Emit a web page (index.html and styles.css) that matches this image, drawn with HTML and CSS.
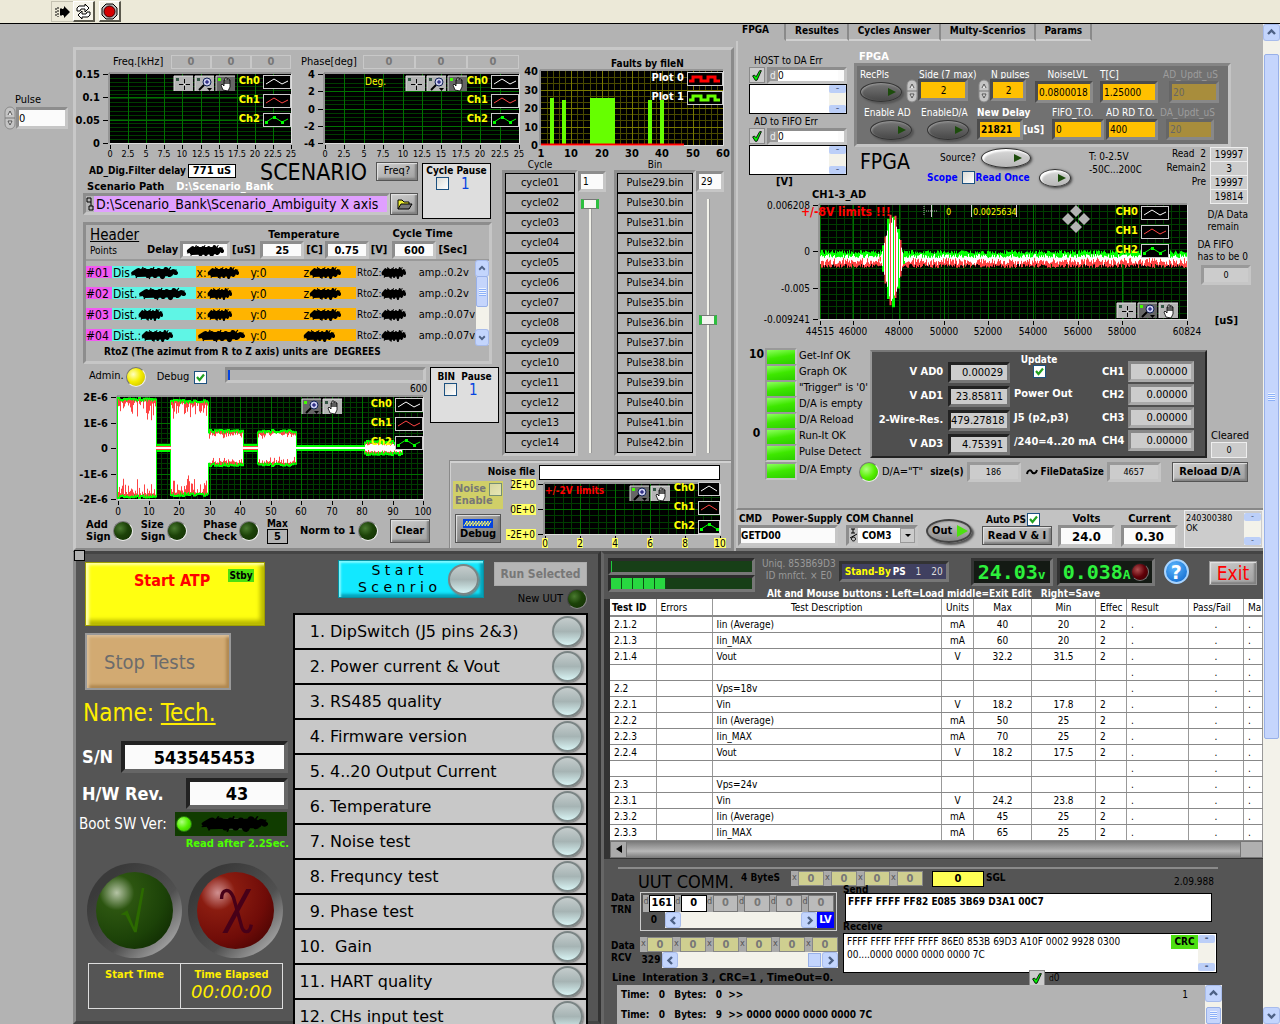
FILE: index.html
```
<!DOCTYPE html>
<html lang="en">

<head>

<meta charset="utf-8">
<meta name="viewport" content="width=device-width, initial-scale=1.0">

<title>ATP station</title>

<link rel="stylesheet" href="styles.css">

</head>

<body>

<svg class="defs" aria-hidden="true">
  <symbol id="okmark" viewBox="0 0 16 16"><path d="M3 9l2-1 2 2 4-7 2 0-5 11-2 0z" fill="#0e0" stroke="#000" stroke-width="1"/></symbol>
  <symbol id="up" viewBox="0 0 15 15"><path d="M4 9l3.500-3.500L11 9" fill="none" stroke="#4d6185" stroke-width="2.400"/></symbol>
  <symbol id="down" viewBox="0 0 15 15"><path d="M4 6l3.500 3.500L11 6" fill="none" stroke="#4d6185" stroke-width="2.400"/></symbol>
  <symbol id="left" viewBox="0 0 15 15"><path d="M9 4L5.500 7.500 9 11" fill="none" stroke="#4d6185" stroke-width="2.400"/></symbol>
  <symbol id="right" viewBox="0 0 15 15"><path d="M6 4l3.500 3.500L6 11" fill="none" stroke="#4d6185" stroke-width="2.400"/></symbol>
  <symbol id="spin" viewBox="0 0 12 24">
    <rect x="1" y="1" width="10" height="22" rx="5" fill="#c4c4c4" stroke="#8a8a8a"/>
    <path d="M1 12h10" stroke="#777"/>
    <path d="M4 9l2-4 2 4M4 15h4l-2 4z" fill="#eee" stroke="#555"/>
  </symbol>
  <symbol id="scribble" viewBox="0 0 40 14" preserveAspectRatio="none">
    <path d="M3 7L7 4 9 9 12 4 15 10 18 4 21 10 24 4 27 11 30 3 33 9 36 5 38 7M4 7L36 6M6 9L34 8M8 5L32 5" fill="none" stroke="#000" stroke-width="4" stroke-linecap="round" stroke-linejoin="round"/>
    <path d="M5 12L11 1M16 13L20 1M27 13L34 1M1 9L39 4" stroke="#000"/>
  </symbol>
</svg>

<header class="toolbar">
  <button class="tool flat" aria-label="Run">
    <svg width="18" height="16"><path d="M1 5h2M1 8h2M1 11h2M4 3v10M6 5h5M6 11h5" stroke="#000" stroke-dasharray="2 1"/><path d="M6 5h4V2l6 6-6 6v-3H6z"/></svg>
  </button>
  <button class="tool" aria-label="Run continuously">
    <svg width="17" height="17" fill="#fff" stroke="#000"><path d="M2 8V5l2-2h6V1l4 4-4 4V6H6L5 8z"/><path d="M15 9v3l-2 2H7v2l-4-4 4-4v3h4l1-2z"/></svg>
  </button>
  <button class="tool abort" aria-label="Abort">
    <svg width="17" height="17"><path d="M5 1h7l4 4v7l-4 4H5l-4-4V5z" fill="#bbb" stroke="#000"/><circle cx="8.500" cy="8.500" r="5.500" fill="#d60000" stroke="#300"/></svg>
  </button>
</header>

<div class="desk">

<aside class="side">
  <label for="pulse">Pulse</label>
  <div class="row">
    <svg class="spin"><use href="#spin"/></svg>
    <input id="pulse" class="in" value="0">
  </div>
</aside>

<main class="stage">

<div class="upper">

<!-- scenario -->
<section class="scenario">

  <div class="charts">
    <div class="chart">
      <div class="chart-head">Freq.[kHz] <output class="cell">0</output><output class="cell">0</output><output class="cell">0</output></div>
      <svg data-chart="freq"></svg>
    </div>
    <div class="chart phase">
      <div class="chart-head">Phase[deg] <output class="cell">0</output><output class="cell">0</output><output class="cell">0</output></div>
      <svg data-chart="phase"></svg>
    </div>
    <div class="chart faults">
      <div class="chart-head"><b>Faults by fileN</b></div>
      <svg data-chart="faults"></svg>
    </div>
  </div>

  <div class="setup">
    <div class="setup-top">
      <div class="paths">
        <div class="row filter">
          <b>AD_Dig.Filter delay</b>
          <output class="boxed">771 uS</output>
          <h2>SCENARIO</h2>
          <button class="btn freq">Freq?</button>
        </div>
        <div class="row path-label">
          <label for="path">Scenario Path</label>
          <span>D:\Scenario_Bank</span>
        </div>
        <div class="row path">
          <div class="path-box">
            <svg width="8" height="14"><path d="M1 1h4v4H1zM5 5v4M3 9h4v4H3z" fill="none" stroke="#000"/></svg>
            <input id="path" value="D:\Scenario_Bank\Scenario_Ambiguity X axis">
          </div>
          <button class="btn folder" aria-label="Browse">
            <svg width="18" height="14"><path d="M2 12V3h4l2 2h5v2" fill="#ee3" stroke="#000"/><path d="M2 12l3-5h11l-3 5z" fill="#777" stroke="#000"/></svg>
          </button>
        </div>
      </div>
      <div class="pause">
        <b>Cycle Pause</b>
        <label><input type="checkbox" class="check"> <em>1</em></label>
      </div>
    </div>

    <div class="header-panel">
      <div class="header-top">
        <div class="titles"><h3>Header</h3><span>Points</span></div>
        <div class="fields">
          <div class="field delay"><span>Delay</span><output class="in"><svg class="ink"><use href="#scribble"/></svg></output><span>[uS]</span></div>
        </div>
        <div class="fields temp">
          <b>Temperature</b>
          <div class="field"><input class="in" aria-label="Temperature C" value="25"><span>[C]</span><input class="in" aria-label="Temperature V" value="0.75"><span>[V]</span></div>
        </div>
        <div class="fields cycletime">
          <b>Cycle Time</b>
          <div class="field"><input class="in" aria-label="Cycle time" value="600"><span>[Sec]</span></div>
        </div>
      </div>
      <div class="points">
        <table>
          <tr><td class="pt">#01</td><td class="dist">Dis<svg class="ink wide"><use href="#scribble"/></svg></td><td class="xyz">x:<svg class="ink"><use href="#scribble"/></svg></td><td class="xyz">y:0</td><td class="xyz">z<svg class="ink"><use href="#scribble"/></svg></td><td class="rtoz">RtoZ:<svg class="ink small"><use href="#scribble"/></svg></td><td>amp.:0.2v</td></tr>
          <tr><td class="pt">#02</td><td class="dist">Dist.<svg class="ink wide"><use href="#scribble"/></svg></td><td class="xyz">x:<svg class="ink small"><use href="#scribble"/></svg></td><td class="xyz">y:0</td><td class="xyz">z<svg class="ink"><use href="#scribble"/></svg></td><td class="rtoz">RtoZ:<svg class="ink small"><use href="#scribble"/></svg></td><td>amp.:0.2v</td></tr>
          <tr><td class="pt">#03</td><td class="dist">Dist.<svg class="ink small"><use href="#scribble"/></svg></td><td class="xyz">x:<svg class="ink small"><use href="#scribble"/></svg></td><td class="xyz">y:0</td><td class="xyz">z<svg class="ink"><use href="#scribble"/></svg></td><td class="rtoz">RtoZ:<svg class="ink small"><use href="#scribble"/></svg></td><td>amp.:0.07v</td></tr>
          <tr><td class="pt">#04</td><td class="dist">Dist.:<svg class="ink"><use href="#scribble"/></svg></td><td class="xyz"><svg class="ink wide"><use href="#scribble"/></svg></td><td class="xyz">y:0</td><td class="xyz"><svg class="ink"><use href="#scribble"/></svg></td><td class="rtoz">RtoZ:<svg class="ink small"><use href="#scribble"/></svg></td><td>amp.:0.07v</td></tr>
        </table>
        <div class="vscroll thin">
          <button aria-label="Up"><svg><use href="#up"/></svg></button>
          <div class="thumb short"></div>
          <button aria-label="Down"><svg><use href="#down"/></svg></button>
        </div>
      </div>
      <b class="note">RtoZ (The azimut from R to Z axis) units are&nbsp; DEGREES</b>
    </div>
  </div>

  <div class="lists">
    <div class="list">
      <span class="list-title">Cycle</span>
      <ul>
        <li>cycle01</li><li>cycle02</li><li>cycle03</li><li>cycle04</li><li>cycle05</li><li>cycle06</li><li>cycle07</li>
        <li>cycle08</li><li>cycle09</li><li>cycle10</li><li>cycle11</li><li>cycle12</li><li>cycle13</li><li>cycle14</li>
      </ul>
    </div>
    <div class="pick">
      <input class="in" aria-label="Cycle index" value="1">
      <input type="range" aria-label="Cycle" min="1" max="60" value="1">
    </div>
    <div class="list bin">
      <span class="list-title">Bin</span>
      <ul>
        <li>Pulse29.bin</li><li>Pulse30.bin</li><li>Pulse31.bin</li><li>Pulse32.bin</li><li>Pulse33.bin</li><li>Pulse34.bin</li><li>Pulse35.bin</li>
        <li>Pulse36.bin</li><li>Pulse37.bin</li><li>Pulse38.bin</li><li>Pulse39.bin</li><li>Pulse40.bin</li><li>Pulse41.bin</li><li>Pulse42.bin</li>
      </ul>
    </div>
    <div class="pick">
      <input class="in" aria-label="Bin index" value="29">
      <input type="range" aria-label="Bin" min="1" max="60" value="29">
    </div>
  </div>

  <div class="wave">
    <div class="row wave-top">
      <span>Admin.</span><i class="led yellow"></i>
      <label class="debug">Debug <input type="checkbox" class="check" checked></label>
      <div class="progress-box"><progress class="tiny" max="600" value="6" aria-label="Progress"></progress><span>600</span></div>
    </div>
    <svg data-chart="wave"></svg>
    <div class="row wave-bottom">
      <b>Add<br>Sign</b><i class="led"></i>
      <b>Size<br>Sign</b><i class="led"></i>
      <b>Phase<br>Check</b><i class="led"></i>
      <label class="max">Max<input value="5"></label>
      <b class="norm">Norm to 1</b><i class="led"></i>
      <button class="btn clear">Clear</button>
    </div>
  </div>

  <div class="pause bin-pause">
    <b>BIN&nbsp; Pause</b>
    <label><input type="checkbox" class="check"> <em>1</em></label>
  </div>

  <div class="noise">
    <div class="row noise-file"><label for="noisefile">Noise file</label><input id="noisefile"></div>
    <div class="row">
      <div class="noise-side">
        <label class="noise-enable">Noise<br>Enable <input type="checkbox" class="check" disabled></label>
        <button class="btn debug-btn"><svg width="30" height="9"><path d="M0 0h30v9H0z" fill="#0443e0"/><path d="M1 7l3-5v5l3-5v5l3-5v5l3-5v5l3-5v5l3-5v5l3-5v5l3-5v5l3-5" fill="none" stroke="#ff6"/></svg>Debug</button>
      </div>
      <svg data-chart="noise"></svg>
    </div>
  </div>

</section>

<!-- fpga -->
<section class="fpga">

  <nav class="tabs">
    <a href="#fpga" class="active">FPGA</a><a href="#resultes">Resultes</a><a href="#cycles">Cycles Answer</a><a href="#multy">Multy-Scenrios</a><a href="#params">Params</a>
  </nav>

  <div class="tab-page">

    <div class="errs">
      <span class="err-title">HOST to DA Err</span>
      <div class="err-row"><svg class="ok"><use href="#okmark"/></svg><label class="in"><i>d</i><input aria-label="HOST to DA code" value="0"></label></div>
      <div class="err-box"><textarea aria-label="HOST to DA source"></textarea><span class="mini"><i>-</i><i>-</i></span></div>
      <span class="err-title">AD to FIFO Err</span>
      <div class="err-row"><svg class="ok"><use href="#okmark"/></svg><label class="in"><i>d</i><input aria-label="AD to FIFO code" value="0"></label></div>
      <div class="err-box"><textarea aria-label="AD to FIFO source"></textarea><span class="mini"><i>-</i><i>-</i></span></div>
      <b>[V]</b>
    </div>

    <div class="fpga-box">
      <b>FPGA</b>
      <div class="fpga-panel">
        <div class="fpga-row one">
          <label>RecPls<button class="oval"></button></label>
          <label class="spun"><span>Side (7 max)</span><svg class="spin"><use href="#spin"/></svg><input class="amber mid" value="2"></label>
          <label class="spun"><span>N pulses</span><svg class="spin"><use href="#spin"/></svg><input class="amber mid" value="2"></label>
          <label class="c">NoiseLVL<input class="amber" value="0.0800018"></label>
          <label>T[C]<input class="amber" value="1.25000"></label>
          <label class="off">AD_Updt_uS<input class="amber" value="20" disabled></label>
        </div>
        <div class="fpga-row two">
          <label>Enable AD<button class="oval"></button></label>
          <label>EnableD/A<button class="oval"></button></label>
          <label class="newdelay"><b>New Delay</b><input class="amber" value="21821"><b>[uS]</b></label>
          <label>FIFO_T.O.<input class="amber" value="0"></label>
          <label>AD RD T.O.<input class="amber" value="400"></label>
          <label class="off">DA_Updt_uS<input class="amber" value="20" disabled></label>
        </div>
      </div>
    </div>

    <div class="source">
      <h2>FPGA</h2>
      <div class="source-mid">
        <div class="row"><span>Source?</span><button class="oval light" aria-label="Source"></button></div>
        <div class="row scope"><b>Scope</b><label><input type="checkbox" class="check"><b>Read Once</b></label><button class="oval light small" aria-label="Read once"></button></div>
      </div>
      <p>T: 0-2.5V<br>-50C...200C</p>
    </div>

    <div class="reads">
      <div>Read&nbsp; 2 <output>19997</output></div>
      <div>Remain2 <output>3</output></div>
      <div>Pre <output>19997</output></div>
      <div><output>19814</output></div>
      <p>D/A Data<br>remain</p>
      <p>DA FIFO<br>has to be 0</p>
      <output class="sunk">0</output>
      <b>[uS]</b>
    </div>

    <div class="ad"><svg data-chart="ad"></svg></div>

    <div class="status">
      <div class="scale"><b>10</b><b>0</b></div>
      <ul class="leds">
        <li>Get-Inf OK</li><li>Graph OK</li><li>"Trigger" is '0'</li><li>D/A is empty</li><li>D/A Reload</li><li>Run-It OK</li><li>Pulse Detect</li><li>D/A Empty</li>
      </ul>
      <div class="status-main">
        <div class="row status-top">
          <div class="volt">
            <div class="ads">
              <span>V AD0</span><output>0.00029</output>
              <span>V AD1</span><output>23.85811</output>
              <span>2-Wire-Res.</span><output>479.27818</output>
              <span>V AD3</span><output>4.75391</output>
            </div>
            <div class="ads-note">
              <label>Update<input type="checkbox" class="check" checked></label>
              <span>Power Out</span>
              <span>J5 (p2,p3)</span>
              <span>/240=4..20 mA</span>
            </div>
            <div class="chs">
              <span>CH1</span><output>0.00000</output>
              <span>CH2</span><output>0.00000</output>
              <span>CH3</span><output>0.00000</output>
              <span>CH4</span><output>0.00000</output>
            </div>
          </div>
          <div class="cleared">Cleared<output>0</output></div>
        </div>
        <div class="row status-low">
          <i class="led lime"></i><span>D/A="T"</span>
          <b>size(s)</b><output class="sunk">186</output>
          <svg width="12" height="8"><path d="M1 6c1-5 4-4 5-2s4 2 5-2" fill="none" stroke="#000" stroke-width="2"/></svg><b>FileDataSize</b><output class="sunk">4657</output>
          <button class="btn reload">Reload D/A</button>
        </div>
      </div>
    </div>
  </div>

  <div class="psu">
    <div class="cmd"><div class="row"><label for="cmd">CMD</label><span>Power-Supply</span></div><input id="cmd" class="in" value="GETD00"></div>
    <label class="com">COM Channel<div class="com-box in"><svg width="9" height="14"><path d="M2 1h4M4 1v4M2 5h4M1 10L8 6M4 9a2 2 0 1 0 1 0z" fill="none" stroke="#000"/></svg><select><option>COM3</option></select></div></label>
    <button class="oval out">Out</button>
    <div class="auto"><label>Auto PS<input type="checkbox" class="check" checked></label><button class="btn">Read V &amp; I</button></div>
    <label class="meter">Volts<input class="in" value="24.0"></label>
    <label class="meter">Current<input class="in" value="0.30"></label>
    <div class="reply"><p>240300380<br>OK</p><span class="mini"><i>-</i><i>-</i></span></div>
  </div>

</section>

</div>

<div class="lower">

<!-- test sequence -->
<section class="atp">
  <div class="corner"></div>
  <div class="atp-left">
    <button class="start">Start ATP<span>Stby</span></button>
    <button class="stop" disabled>Stop Tests</button>
    <p class="name">Name: <u>Tech.</u></p>
    <label class="serial">S/N<input value="543545453"></label>
    <label class="serial rev">H/W Rev.<input value="43"></label>
    <div class="boot">Boot SW Ver:<div><i class="led lime"></i><svg class="ink"><use href="#scribble"/></svg></div></div>
    <b class="after">Read after 2.2Sec.</b>
    <div class="verdict">
      <div class="dome pass"><svg viewBox="0 0 40 60"><path d="M3 34l8-5 8 20L28 3l3 0-9 52-3 0L9 35z" fill="#2c6a00"/></svg></div>
      <div class="dome fail"><svg viewBox="0 0 40 60"><path d="M3 16C3 4 12 2 17 14L26 46c2 10 10 12 12 0" fill="none" stroke="#470018" stroke-width="4"/><path d="M32 4h6L10 56H4z" fill="#470018"/></svg></div>
    </div>
    <div class="times">
      <div><b>Start Time</b></div>
      <div><b>Time Elapsed</b><time>00:00:00</time></div>
    </div>
  </div>
  <div class="atp-right">
    <div class="run">
      <button class="scen"><span>S t a r t<br>S c e n r i o</span><i class="glass"></i></button>
      <div class="run-sel">
        <button class="btn" disabled>Run Selected</button>
        <div class="row">New UUT<i class="led"></i></div>
      </div>
    </div>
    <ol class="tests">
      <li><span>1.</span>DipSwitch (J5 pins 2&amp;3)<button class="glass" aria-label="DipSwitch"></button></li>
      <li><span>2.</span>Power current &amp; Vout<button class="glass" aria-label="Power current"></button></li>
      <li><span>3.</span>RS485 quality<button class="glass" aria-label="RS485"></button></li>
      <li><span>4.</span>Firmware version<button class="glass" aria-label="Firmware"></button></li>
      <li><span>5.</span>4..20 Output Current<button class="glass" aria-label="Output current"></button></li>
      <li><span>6.</span>Temperature<button class="glass" aria-label="Temperature"></button></li>
      <li><span>7.</span>Noise test<button class="glass" aria-label="Noise"></button></li>
      <li><span>8.</span>Frequncy test<button class="glass" aria-label="Frequncy"></button></li>
      <li><span>9.</span>Phase test<button class="glass" aria-label="Phase"></button></li>
      <li><span>10.</span>&nbsp;Gain<button class="glass" aria-label="Gain"></button></li>
      <li><span>11.</span>HART quality<button class="glass" aria-label="HART"></button></li>
      <li><span>12.</span>CHs input test<button class="glass" aria-label="CHs input"></button></li>
    </ol>
  </div>
</section>

<!-- results -->
<section class="results">
  <div class="res-top">
    <div class="bars">
      <progress max="100" value="1" aria-label="Step progress"></progress>
      <progress class="blocks" max="100" value="39" aria-label="Total progress"></progress>
    </div>
    <p class="uniq">Uniq. 853B69D3<br>ID mnfct. × E0</p>
    <div class="standby"><b>Stand-By</b><strong>PS</strong><span>1</span><span>20</span></div>
    <output class="digits">24.03<small>v</small></output>
    <output class="digits amp">0.038<small>A</small><i class="led red"></i></output>
    <button class="help" aria-label="Help">?</button>
    <button class="btn exit">Exit</button>
  </div>
  <p class="hint">Alt and Mouse buttons : Left=Load middle=Exit Edit&nbsp;&nbsp; Right=Save</p>

  <div class="table-box">
    <table class="grid">
      <colgroup><col class="c-id"><col class="c-err"><col><col class="c-unit"><col class="c-max"><col class="c-min"><col class="c-eff"><col class="c-res"><col class="c-pf"><col class="c-ma"></colgroup>
      <thead>
        <tr><th><b>Test ID</b></th><th>Errors</th><th>Test Description</th><th>Units</th><th>Max</th><th>Min</th><th>Effec</th><th>Result</th><th>Pass/Fail</th><th>Ma</th></tr>
      </thead>
      <tbody>
        <tr><td>2.1.2</td><td></td><td>Iin (Average)</td><td>mA</td><td>40</td><td>20</td><td>2</td><td>.</td><td>.</td><td>.</td></tr>
        <tr><td>2.1.3</td><td></td><td>Iin_MAX</td><td>mA</td><td>60</td><td>20</td><td>2</td><td>.</td><td>.</td><td>.</td></tr>
        <tr><td>2.1.4</td><td></td><td>Vout</td><td>V</td><td>32.2</td><td>31.5</td><td>2</td><td>.</td><td>.</td><td>.</td></tr>
        <tr><td></td><td></td><td></td><td></td><td></td><td></td><td></td><td>.</td><td>.</td><td>.</td></tr>
        <tr><td>2.2</td><td></td><td>Vps=18v</td><td></td><td></td><td></td><td></td><td>.</td><td>.</td><td>.</td></tr>
        <tr><td>2.2.1</td><td></td><td>Vin</td><td>V</td><td>18.2</td><td>17.8</td><td>2</td><td>.</td><td>.</td><td>.</td></tr>
        <tr><td>2.2.2</td><td></td><td>Iin (Average)</td><td>mA</td><td>50</td><td>25</td><td>2</td><td>.</td><td>.</td><td>.</td></tr>
        <tr><td>2.2.3</td><td></td><td>Iin_MAX</td><td>mA</td><td>70</td><td>25</td><td>2</td><td>.</td><td>.</td><td>.</td></tr>
        <tr><td>2.2.4</td><td></td><td>Vout</td><td>V</td><td>18.2</td><td>17.5</td><td>2</td><td>.</td><td>.</td><td>.</td></tr>
        <tr><td></td><td></td><td></td><td></td><td></td><td></td><td></td><td>.</td><td>.</td><td>.</td></tr>
        <tr><td>2.3</td><td></td><td>Vps=24v</td><td></td><td></td><td></td><td></td><td>.</td><td>.</td><td>.</td></tr>
        <tr><td>2.3.1</td><td></td><td>Vin</td><td>V</td><td>24.2</td><td>23.8</td><td>2</td><td>.</td><td>.</td><td>.</td></tr>
        <tr><td>2.3.2</td><td></td><td>Iin (Average)</td><td>mA</td><td>45</td><td>25</td><td>2</td><td>.</td><td>.</td><td>.</td></tr>
        <tr><td>2.3.3</td><td></td><td>Iin_MAX</td><td>mA</td><td>65</td><td>25</td><td>2</td><td>.</td><td>.</td><td>.</td></tr>
      </tbody>
    </table>
    <div class="hbar"><button aria-label="Scroll left"><svg width="8" height="10"><path d="M7 1v8L1 5z"/></svg></button><span></span></div>
  </div>

  <div class="comm">
    <div class="comm-head">
      <h2>UUT COMM.</h2>
      <b class="bytes">4 ByteS</b>
      <div class="hex"><i>x</i><output>0</output><i>x</i><output>0</output><i>x</i><output>0</output><i>x</i><output>0</output></div>
      <output class="sgl">0</output><b>SGL</b>
      <span class="ver">2.09.988</span>
    </div>
    <div class="comm-body">
      <div class="comm-left">
        <div class="row trn">
          <b>Data<br>TRN</b>
          <div class="trn-box">
            <div class="hex dec"><i>d</i><input aria-label="Byte 0" value="161"><i>d</i><input aria-label="Byte 1" value="0"><i>d</i><output>0</output><i>d</i><output>0</output><i>d</i><output>0</output><i>d</i><output>0</output></div>
            <div class="row"><b class="idx">0</b><div class="hscroll"><button aria-label="Left"><svg><use href="#left"/></svg></button><span></span><button aria-label="Right"><svg><use href="#right"/></svg></button></div><b class="lv">LV</b></div>
          </div>
        </div>
        <div class="row rcv">
          <b>Data<br>RCV</b>
          <div class="rcv-box">
            <div class="hex"><i>x</i><output>0</output><i>x</i><output>0</output><i>x</i><output>0</output><i>x</i><output>0</output><i>x</i><output>0</output><i>x</i><output>0</output></div>
            <div class="row"><b class="idx">329</b><div class="hscroll"><button aria-label="Left"><svg><use href="#left"/></svg></button><span></span><i></i><button aria-label="Right"><svg><use href="#right"/></svg></button></div></div>
          </div>
        </div>
      </div>
      <div class="comm-right">
        <label for="send">Send</label>
        <textarea id="send">FFFF FFFF FF82 E085 3B69 D3A1 00C7</textarea>
        <label for="receive">Receive</label>
        <div class="receive">
          <textarea id="receive">FFFF FFFF FFFF FFFF 86E0 853B 69D3 A10F 0002 9928 0300
00....0000 0000 0000 0000 7C</textarea>
          <b>CRC</b><span class="mini"><i>-</i><i>-</i></span>
        </div>
      </div>
    </div>
    <div class="line"><b>Line&nbsp; Interation 3 , CRC=1 , TimeOut=0.</b><svg class="ok"><use href="#okmark"/></svg><span><small>d</small>0</span></div>
    <div class="log">
      <div class="log-text">
        <p><b>Time:&nbsp;&nbsp; 0&nbsp;&nbsp; Bytes:&nbsp;&nbsp; 0&nbsp; &gt;&gt;</b><span>1</span></p>
        <p><b>Time:&nbsp;&nbsp; 0&nbsp;&nbsp; Bytes:&nbsp;&nbsp; 9&nbsp; &gt;&gt; 0000 0000 0000 0000 7C</b></p>
      </div>
      <div class="vscroll">
        <button aria-label="Up"><svg><use href="#up"/></svg></button>
        <span class="gap"></span>
        <div class="thumb"></div>
      </div>
    </div>
  </div>
</section>

</div>

</main>

<div class="vscroll page">
  <button aria-label="Up"><svg><use href="#up"/></svg></button>
  <span class="gap"></span>
  <div class="thumb"></div>
  <span class="fill"></span>
  <button aria-label="Down"><svg><use href="#down"/></svg></button>
</div>

</div>

<script src="charts.js"></script>

</body>
</html>
```
FILE: styles.css
```
* {
  box-sizing: border-box;
}

html, body {
  height: 100%;
  margin: 0;
}

body {
  display: flex;
  flex-direction: column;
  overflow: hidden;
  background: #b3b3b3;
  color: #000;
  font: 11px/12px "DejaVu Sans Condensed", "DejaVu Sans", sans-serif;
  white-space: nowrap;
}

input, button, select, textarea {
  font: inherit;
  color: inherit;
  margin: 0;
  padding: 0;
  border: 0;
  border-radius: 0;
  min-width: 0;
}

textarea {
  display: block;
  resize: none;
  background: #fff;
  overflow: hidden;
}

h2, h3, p, ul, ol {
  margin: 0;
  padding: 0;
  font-weight: normal;
  list-style: none;
}

i { font-style: normal; }
b, label { display: block; }
svg { display: block; flex: none; overflow: visible; }
output { text-align: center; overflow: hidden; }

.defs { width: 0; height: 0; position: absolute; }

.row { display: flex; align-items: center; }

/* shared controls */

.in {
  border: 3px solid;
  border-color: #8d8d8d #c6c6c6 #c6c6c6 #8d8d8d;
  background: #fbfbfb;
  height: 20px;
}

.btn {
  border: 1px solid #555;
  background: linear-gradient(160deg, #ccc, #a0a0a0);
  box-shadow: inset 1px 1px 1px #e4e4e4, inset -2px -2px 2px #808080;
}

.check {
  appearance: none;
  width: 13px;
  height: 13px;
  border: 1px solid #1c5180;
  background: linear-gradient(135deg, #dcdcd7, #fff);
}

.check:checked {
  background: #fff url("data:image/svg+xml,%3Csvg xmlns='http://www.w3.org/2000/svg' viewBox='0 0 11 11'%3E%3Cpath d='M2 5l2.500 3L9 2.500' fill='none' stroke='%2321a121' stroke-width='2.200'/%3E%3C/svg%3E");
}

.led {
  width: 20px;
  height: 20px;
  flex: none;
  border-radius: 50%;
  border: 1px solid #777;
  border-right-color: #eee;
  border-bottom-color: #eee;
  background: radial-gradient(circle at 35% 35%, #4a7a30, #1c4208 45%, #112c03);
}

.led.yellow { background: radial-gradient(circle at 35% 35%, #ffffc0, #f5ee00 45%, #c0b000); }
.led.lime { background: radial-gradient(circle at 35% 35%, #b0ff80, #55f000 50%, #33b000); }
.led.red { background: radial-gradient(circle at 35% 35%, #b05050, #600008 50%, #300); border-color: #222 #777 #777 #222; }

.spin { width: 12px; height: 24px; }

.ink { display: inline-block; width: 32px; height: 14px; vertical-align: middle; }
.ink.small { width: 25px; }
.ink.wide { width: 48px; }

.oval {
  display: flex;
  align-items: center;
  justify-content: flex-end;
  width: 42px;
  height: 20px;
  padding-right: 5px;
  border-radius: 50%;
  border: 1px solid #333;
  background: linear-gradient(#777, #484848);
  box-shadow: inset 1px 1px 2px #999, 2px 2px 2px #555;
}

.oval::after {
  content: "";
  border: 4px solid transparent;
  border-left: 8px solid #1d4c0c;
  border-right: 0;
}

.oval.light {
  width: 50px;
  padding-right: 8px;
  background: linear-gradient(#d8d8d8, #b8b8b8);
  box-shadow: inset 2px 2px 2px #fff, 1px 1px 3px #333;
}

.oval.light.small { width: 32px; padding-right: 4px; }

.mini {
  display: flex;
  flex-direction: column;
  justify-content: space-between;
  width: 17px;
  background: #f3f2ea;
}

.mini i {
  height: 8px;
  border-radius: 2px;
  background: #bccff8;
  line-height: 6px;
  text-align: center;
  color: #4d6185;
}

.vscroll {
  display: flex;
  flex-direction: column;
  width: 17px;
  background: #f3f2ea;
}

.vscroll button, .hscroll button {
  flex: none;
  width: 15px;
  height: 15px;
  margin: 1px;
  border-radius: 2px;
  background: #c3d5fd;
  box-shadow: 0 0 0 1px #a8bcec;
}

.vscroll svg, .hscroll svg { width: 15px; height: 15px; }
.vscroll .gap { height: 13px; }
.vscroll .fill { flex: 1; }

.thumb {
  width: 15px;
  margin: 0 1px;
  height: 40px;
  border-radius: 2px;
  border: 1px solid #98b0e8;
  background: repeating-linear-gradient(#eef4ff 0 1px, #8cb0f8 1px 2px) center / 7px 8px no-repeat, #c5d5fc;
}

.thumb.short { height: 31px; }
.page .thumb { height: 685px; }

.vscroll.thin { width: 13px; justify-content: flex-start; }
.vscroll.thin button, .vscroll.thin .thumb, .vscroll.thin svg { width: 12px; margin: 0; }
.vscroll.thin button:last-child { margin-top: auto; }

/* toolbar */

.toolbar {
  flex: none;
  display: flex;
  height: 24px;
  padding: 1px 0 0 51px;
  background: #ece9d8;
  border-bottom: 1px solid #000;
}

.tool {
  display: grid;
  place-items: center;
  width: 22px;
  height: 21px;
  background: #f6f4ea;
  border: 1px solid #fff;
  border-right: 2px solid #5a584c;
  border-bottom: 2px solid #5a584c;
}

.tool.flat { background: none; border: 1px solid #c5c2b2; border-right: 0; }
.tool.abort { margin-left: 4px; }

.desk {
  flex: 1;
  display: flex;
  min-height: 0;
}

.side {
  width: 73px;
  padding: 70px 0 0 4px;
}

.side label { padding-left: 11px; }
.side .in { width: 52px; height: 22px; }

.stage {
  flex: 1;
  min-width: 0;
  display: flex;
  flex-direction: column;
}

.upper { display: flex; height: 527px; flex: none; }
.lower { display: flex; flex: 1; min-height: 0; }

/* scenario */

.scenario {
  display: grid;
  grid-template: 110px 206px 94px 1fr / 354px 71px 1fr;
  width: 661px;
  margin-top: 23px;
  border: 3px solid #c8c8c8;
  border-right-color: #8a8a8a;
  border-bottom-color: #8a8a8a;
}

.charts {
  grid-area: 1 / 1 / 2 / 4;
  display: flex;
}

.chart { width: 222px; }
.chart.phase { width: 228px; }
.chart.faults { flex: 1; }

.chart-head {
  display: flex;
  align-items: center;
  height: 20px;
  padding: 5px 0 1px 37px;
}

.phase .chart-head { padding-left: 3px; }
.faults .chart-head { padding: 7px 0 0 85px; }
.faults b { font-size: 10px; }

.cell {
  width: 40px;
  height: 14px;
  border: 1px solid #c8c8c8;
  color: #777;
  font-weight: bold;
}

.phase .cell { width: 52px; }
.cell:first-of-type { margin-left: auto; }
.chart:first-child .cell:last-child { margin-right: 7px; }
.phase .cell:last-child { margin-right: 7px; }

.setup { grid-area: 2 / 1 / 3 / 3; padding: 1px 0 0 7px; }
.setup-top { display: flex; height: 61px; }
.paths { width: 339px; }

.filter { height: 20px; padding-left: 6px; }
.filter b { font-size: 10px; width: 99px; }
.boxed { width: 48px; border: 1px solid #000; background: #fff; font-weight: bold; }
.filter h2 { font-size: 23px; margin-left: 24px; line-height: 20px; padding-top: 2px; }
.freq { width: 42px; height: 19px; margin-left: auto; margin-right: 4px; }

.path-label { height: 11px; padding-left: 4px; font-size: 11px; font-weight: bold; }
.path-label span { margin-left: 12px; color: #fff; }

.path { height: 24px; }

.path-box {
  flex: 1;
  display: flex;
  align-items: center;
  height: 22px;
  border: 3px solid;
  border-color: #8d8d8d #c6c6c6 #c6c6c6 #8d8d8d;
}

.path-box input { flex: 1; height: 16px; padding-left: 2px; background: #e0a0ff; font-size: 14px; }
.folder { width: 28px; height: 22px; margin-right: 4px; padding-left: 5px; }

.pause {
  width: 69px;
  height: 56px;
  margin-top: 2px;
  border: 1px solid #000;
  background: #dedede;
  padding-top: 1px;
}

.pause b { text-align: center; font-size: 10px; }
.pause label { display: flex; padding-left: 13px; gap: 12px; }
.pause em { font-style: normal; font-size: 15px; color: #0443e0; line-height: 15px; }

.header-panel {
  width: 409px;
  height: 142px;
  border: 3px solid;
  border-color: #8d8d8d #c6c6c6 #c6c6c6 #8d8d8d;
}

.header-top { display: flex; height: 36px; border-bottom: 2px solid #999; }
.titles { width: 61px; padding: 3px 0 0 4px; font-size: 10px; }
.titles h3 { font-size: 15px; line-height: 15px; text-decoration: underline; margin-bottom: 2px; }
.fields { display: flex; flex-direction: column; justify-content: flex-end; font-weight: bold; }
.field { display: flex; align-items: center; gap: 2px; }
.field .in { width: 44px; text-align: center; height: 18px; }
.delay .in { width: 50px; }
.delay .ink { display: block; width: 38px; margin-left: 3px; }
.temp { margin-left: 5px; }
.temp b, .cycletime b { padding-left: 8px; }
.cycletime { margin-left: 5px; }
.cycletime b { padding: 0 0 1px; }

.points { display: flex; justify-content: space-between; height: 84px; }
.points table { border-spacing: 0; margin-top: 1px; }
.points tr { height: 21px; }
.points td { padding: 0 1px; height: 21px; font-size: 12px; line-height: 12px; background: linear-gradient(transparent 4px, var(--c, transparent) 4px 16px, transparent 16px); }
.points .pt { --c: #f259f2; width: 26px; padding: 0; }
.points .dist { --c: #5ff5e5; width: 84px; }
.points .xyz { --c: #ffb400; width: 54px; }
.points .rtoz { font-size: 10px; width: 61px; }
.points td:last-child { font-size: 11px; padding-left: 2px; }
.note { padding: 1px 0 0 18px; font-size: 10px; }

.lists {
  grid-area: 2 / 3 / 4 / 4;
  display: flex;
  padding-left: 1px;
}

.list { width: 76px; }
.list.bin { width: 82px; margin-left: 8px; }
.list-title { display: block; text-align: center; font-size: 10px; height: 10px; line-height: 10px; }

.list ul {
  border: 3px solid;
  border-color: #8d8d8d #c6c6c6 #c6c6c6 #8d8d8d;
}

.list li {
  height: 20px;
  border: 1px solid #000;
  line-height: 17px;
  text-align: center;
}

.pick { width: 28px; padding-top: 11px; }
.pick .in { width: 28px; height: 21px; padding-left: 2px; font-size: 10px; display: block; }

.pick input[type=range] {
  appearance: none;
  display: block;
  writing-mode: vertical-lr;
  width: 18px;
  height: 254px;
  margin: 7px 0 0 3px;
  background: linear-gradient(90deg, transparent 8px, #f2f2ea 8px 10px, #999 10px 11px, transparent 11px);
}

.pick input::-webkit-slider-thumb {
  appearance: none;
  width: 18px;
  height: 10px;
  border: 1px solid #777;
  border-left: 3px solid #2cbf3e;
  border-right: 3px solid #2cbf3e;
  background: #f4f4f0;
}

.wave { grid-area: 3 / 1 / 5 / 2; }
.wave-top { height: 26px; padding-left: 13px; }
.wave-top span { margin-top: -6px; }
.wave-top .led { margin: -4px 0 0 2px; }
.debug { display: flex; align-items: center; gap: 5px; margin: -4px 0 0 11px; }
.progress-box { margin-left: 18px; width: 202px; text-align: right; height: 24px; }
.progress-box span { font-size: 10px; line-height: 11px; display: block; margin: 0; }

progress {
  appearance: none;
  display: block;
  border: 3px solid;
  border-color: #8d8d8d #c6c6c6 #c6c6c6 #8d8d8d;
}

progress.tiny { width: 201px; height: 16px; }
progress::-webkit-progress-bar { background: #b3b3b3; }
progress::-webkit-progress-value { background: #0443e0; }

.wave-bottom { height: 30px; padding-left: 10px; }
.wave-bottom .led { margin: 0 8px 0 2px; }
.wave-bottom .led:nth-of-type(2) { margin-right: 16px; }
.max { font-size: 10px; line-height: 10px; font-weight: bold; width: 22px; }
.max input { display: block; width: 21px; height: 15px; border: 1px solid #000; background: none; text-align: center; font-size: 11px; }
.norm { margin-left: 12px; }
.clear { width: 53px; height: 24px; font-weight: bold; margin-left: 4px; }

.bin-pause { grid-area: 3 / 2 / 4 / 3; margin-top: 1px; padding-top: 3px; }

.noise {
  grid-area: 4 / 2 / 5 / 4;
  margin: 1px 0 0 20px;
  padding-left: 2px;
  border: 2px solid #d0d0d0;
  border-width: 2px 0 0 1px;
  outline: 1px solid #8a8a8a;
}

.noise-file { height: 18px; font-weight: bold; font-size: 10px; }
.noise-file label { width: 86px; text-align: right; padding-right: 4px; }
.noise-file input { width: 181px; height: 15px; border: 1px solid #000; background: #fff; }
.noise-side { width: 50px; align-self: flex-start; }
.noise-enable { position: relative; height: 28px; padding: 2px; background: #d0cf68; color: #777; font-weight: bold; }
.noise-enable .check { position: absolute; right: 1px; top: 2px; opacity: .5; }
.debug-btn { width: 46px; height: 29px; margin: 5px 0 0 2px; font-weight: bold; background: linear-gradient(160deg, #aaa, #777); }
.debug-btn svg { margin: 2px auto 0; }

/* fpga */

.fpga {
  flex: 1;
  min-width: 0;
  display: flex;
  flex-direction: column;
  padding-left: 2px;
}

.tabs { display: flex; height: 17px; font-size: 10px; font-weight: bold; }

.tabs a {
  color: inherit;
  text-decoration: none;
  padding: 0 8px 0 9px;
  line-height: 14px;
  border-right: 2px solid #8a8a8a;
  border-bottom: 2px solid #d0d0d0;
}

.tabs .active { padding: 0 15px 0 6px; line-height: 11px; border-bottom-color: transparent; }

.tab-page {
  flex: 1;
  display: grid;
  grid-template: 106px 41px 154px 1fr / 112px 1fr 105px;
  border-left: 2px solid #c8c8c8;
  border-bottom: 2px solid #888;
}

.errs { grid-area: 1 / 1 / 3 / 2; padding: 13px 0 0 11px; }
.err-title { display: block; padding-left: 5px; font-size: 10px; line-height: 13px; }
.err-row { display: flex; }
.ok { width: 16px; height: 16px; border: 1px solid #8a8a8a; background: #ccc; }
.err-row .in { flex: none; display: flex; width: 80px; height: 17px; margin-left: 2px; font-size: 10px; line-height: 12px; }
.err-row i { width: 8px; background: #999; color: #eee; }
.err-row input { width: 60px; font-size: 10px; height: 11px; }
.err-box { display: flex; width: 98px; height: 30px; margin-bottom: 1px; border: 1px solid #000; background: #fff; }
.err-box textarea { flex: 1; min-width: 0; }
.errs > b { margin: 1px 0 0 27px; }

.fpga-box { grid-area: 1 / 2 / 2 / 4; padding: 10px 0 0 4px; }
.fpga-box > b { color: #fff; padding-left: 5px; line-height: 12px; }

.fpga-panel {
  width: 377px;
  height: 84px;
  padding: 3px 0 0 3px;
  background: #717171;
  border: 3px solid #858585;
  border-right-color: #c4c4c4;
  border-bottom-color: #c4c4c4;
  color: #fff;
}

.fpga-row { display: grid; height: 38px; font-size: 10px; }
.fpga-row.one { grid-template-columns: 46px 72px 57px 65px 63px 1fr; }
.fpga-row.two { grid-template-columns: 57px 56px 75px 54px 54px 1fr; padding-left: 4px; }
.fpga-row .oval { margin-top: 1px; }
.fpga-row.two .oval { margin-left: 6px; }

.amber {
  display: block;
  width: 58px;
  height: 22px;
  padding-left: 1px;
  border: 3px solid;
  border-color: #4c4c4c #8a8a8a #8a8a8a #4c4c4c;
  background: #ffc000;
  color: #000;
}

.amber.mid { text-align: center; width: 50px; }
.spun { display: flex; flex-wrap: wrap; align-content: flex-start; }
.spun span { width: 100%; height: 10px; padding-left: 13px; }
.spun + .spun .mid { width: 36px; }
.off { color: #9d9d9d; }
.off .amber { background: #a88d3c; border-color: #666 #888 #888 #666; width: 50px; margin-left: 6px; color: #666; }
.c { text-align: center; }
.newdelay { display: flex; flex-wrap: wrap; align-content: flex-start; align-items: center; }
.newdelay b:first-child { width: 100%; }
.newdelay .amber { width: 45px; font-weight: bold; }
.newdelay b { font-size: 10px; }
.two .amber { width: 52px; height: 21px; }
.two .newdelay .amber { width: 46px; }
.two .off .amber { width: 48px; }

.source { grid-area: 2 / 2 / 3 / 3; display: flex; padding-left: 10px; }
.source h2 { font-size: 21px; line-height: 30px; width: 67px; }
.source-mid { width: 162px; font-size: 10px; }
.source-mid .row:first-child { padding-left: 13px; gap: 5px; height: 21px; }
.scope { gap: 4px; height: 19px; color: #00f; }
.scope label { display: flex; align-items: center; gap: 1px; }
.scope .oval { margin-left: auto; margin-right: 18px; height: 18px; }
.source p { font-size: 10px; line-height: 13px; padding-top: 3px; }

.reads {
  grid-area: 2 / 3 / 4 / 4;
  padding-right: 15px;
  display: flex;
  flex-direction: column;
  align-items: flex-end;
  font-size: 10px;
}

.reads div { display: flex; align-items: center; gap: 4px; height: 14px; }
.reads div output { width: 38px; height: 15px; border: 1px solid #eee; background: #ccc; line-height: 13px; }
.reads p { margin-top: 6px; }
.reads .sunk { margin-top: 2px; margin-right: -3px; }
.reads b { margin: 30px 10px 0 0; font-size: 11px; }

.sunk {
  width: 50px;
  height: 20px;
  border: 3px solid;
  border-color: #999 #c6c6c6 #c6c6c6 #999;
  background: #ccc;
  font-size: 9px;
  line-height: 14px;
}

.ad { grid-area: 3 / 1 / 4 / 3; padding-left: 10px; }

.status { grid-area: 4 / 1 / 5 / 4; display: flex; padding: 6px 0 0 10px; }
.scale { width: 17px; font-size: 12px; text-align: center; }
.scale b { height: 79px; }
.leds { width: 94px; }
.leds li { height: 16px; line-height: 16px; display: flex; gap: 2px; }
.leds li:last-child { margin-top: 2px; }
.leds li::before { content: ""; flex: none; width: 28px; height: 14px; border: 2px solid #999; border-right-color: #c6c6c6; border-bottom-color: #c6c6c6; background: linear-gradient(170deg, #8dff60, #3ee800 50%, #2ccc00); }
.status-main { padding-top: 2px; }
.status-top { align-items: flex-end; padding-left: 11px; }

.volt {
  display: flex;
  gap: 4px;
  width: 337px;
  height: 108px;
  padding: 9px 6px 0;
  background: #4f4f4f;
  border: 2px solid #222;
  border-left-color: #999;
  border-top-color: #777;
  color: #fff;
  font-weight: bold;
}

.ads, .chs { display: grid; grid-template-columns: auto auto; align-content: start; align-items: center; gap: 2px 4px; text-align: right; }
.ads { grid-template-rows: repeat(4, 22px); width: 132px; }
.ads output, .chs output { width: 62px; height: 21px; border: 3px solid; border-color: #222 #777 #777 #222; background: #ccc; color: #000; font-weight: normal; text-align: right; padding-right: 4px; line-height: 15px; justify-self: end; }
.ads-note { width: 84px; font-size: 11px; }
.ads-note span { display: block; height: 24px; line-height: 24px; }
.ads-note label { height: 23px; margin-top: -6px; margin-bottom: 4px; text-align: center; width: 50px; font-size: 10px; line-height: 10px; }
.ads-note .check { display: block; margin: 0 auto; }
.chs { grid-template-rows: repeat(4, 21px); }
.chs output { width: 66px; border-color: #888 #aaa #aaa #888; }

.cleared { padding-left: 4px; font-size: 11px; }
.cleared output { display: block; width: 36px; height: 16px; border: 1px solid #eee; background: #ccc; font-size: 9px; line-height: 14px; }

.status-low { height: 24px; gap: 3px; margin-top: 2px; }
.status-low b { font-size: 10px; }
.status-low span + b { margin-left: 4px; }
.status-low .sunk { width: 54px; margin-right: 2px; }
.reload { width: 76px; height: 20px; margin-left: 6px; font-weight: bold; }

.psu {
  flex: none;
  display: flex;
  align-items: flex-start;
  gap: 6px;
  height: 41px;
  padding: 3px 0 0 2px;
  background: #c2c2c2;
  border-bottom: 3px solid #777;
  font-size: 10px;
  font-weight: bold;
}

.cmd { width: 102px; }
.cmd .row { gap: 10px; padding-left: 1px; }
.cmd .in { width: 100px; height: 21px; font-weight: bold; }
.com { width: 72px; }
.com-box { display: flex; height: 21px; width: 72px; background: #c2c2c2; }
.com select {
  flex: 1;
  appearance: none;
  padding-left: 4px;
  font-size: 10px;
  font-weight: bold;
  background: #fff url("data:image/svg+xml,%3Csvg xmlns='http://www.w3.org/2000/svg' viewBox='0 0 15 15'%3E%3Cpath d='M0 0h15v15H0z' fill='%23999'/%3E%3Cpath d='M1 1h13v13H1z' fill='%23ccc'/%3E%3Cpath d='M5 6h6L8 9z'/%3E%3C/svg%3E") right / 15px 15px no-repeat;
}
.oval.out { width: 46px; height: 24px; margin: 6px 4px 0 2px; background: linear-gradient(#c8c8c8, #888); border: 2px solid #444; justify-content: space-between; padding: 0 2px 0 4px; font-size: 11px; font-weight: bold; }
.oval.out::after { border-left-color: #4de010; border-left-width: 11px; border-top-width: 6px; border-bottom-width: 6px; }
.auto { width: 70px; }
.auto label { display: flex; align-items: center; padding-left: 4px; gap: 1px; }
.auto .btn { width: 70px; height: 19px; font-weight: bold; font-size: 11px; display: block; }
.meter { width: 57px; text-align: center; font-size: 11px; }
.meter .in { display: block; width: 57px; height: 22px; text-align: center; font-size: 13px; }
.reply { flex: 1; display: flex; justify-content: space-between; height: 38px; margin-top: -3px; border: 1px solid #eee; background: #ccc; font-weight: normal; font-size: 9px; line-height: 10px; padding: 2px 1px; }

/* test sequence */

.atp {
  position: relative;
  display: flex;
  width: 528px;
  background: #555;
  border: 3px solid #444;
  border-left-color: #8a8a8a;
  border-right-color: #333;
  padding: 8px 0 0 9px;
}

.corner { position: absolute; left: -2px; top: -4px; width: 11px; height: 11px; border: 1px solid #000; background: #b3b3b3; }

.atp-left { width: 208px; color: #fff; }

.start {
  display: flex;
  align-items: flex-start;
  width: 180px;
  height: 64px;
  padding: 6px 10px 0 48px;
  border: 1px solid #a0a000;
  background: #ff1;
  box-shadow: inset 3px 2px 3px #ffffb0, inset -4px -5px 4px #b8b800;
  color: #f00;
  font-size: 16px;
  line-height: 24px;
  font-weight: bold;
}

.start span { margin-left: auto; width: 26px; background: #4de010; color: #000; font-size: 10px; line-height: 13px; text-align: center; }

.stop {
  display: block;
  width: 146px;
  height: 57px;
  margin-top: 7px;
  padding-left: 17px;
  text-align: left;
  border: 2px solid #999;
  background: #d2aa72;
  box-shadow: inset 2px 2px 3px #dcc09a, inset -3px -3px 3px #b08850;
  color: #6c6c6c;
  font-size: 20px;
}

.name { margin-top: 9px; color: #fe0; font-size: 24px; line-height: 28px; margin-left: -2px; }

.serial { display: flex; align-items: center; justify-content: space-between; margin: 14px 5px 0 -3px; font-size: 18px; font-weight: bold; }
.serial input { width: 167px; height: 32px; border: 4px solid; border-color: #222 #666 #666 #222; background: #fbfbfb; color: #000; text-align: center; font-size: 18px; font-weight: bold; }
.serial.rev { margin-top: 5px; }
.serial.rev input { width: 102px; height: 31px; }

.boot { display: flex; align-items: center; justify-content: space-between; margin: 3px 6px 0 -6px; font-size: 15px; }
.boot > div { display: flex; align-items: center; width: 112px; height: 24px; background: #103c00; }
.boot .led { width: 16px; height: 16px; margin-left: 1px; border-color: #2a7a10; }
.boot .ink { width: 68px; height: 18px; margin-left: 8px; background: radial-gradient(#fff, transparent 50%); }
.after { color: #4dff00; text-align: right; margin-right: 4px; padding-top: 2px; }

.verdict { display: flex; gap: 6px; margin: 13px 0 0 2px; }

.dome {
  display: grid;
  place-items: center;
  width: 95px;
  height: 95px;
  border-radius: 50%;
  border: 9px solid transparent;
  background: radial-gradient(circle at 27% 27%, #b5c4a5, #2c5510 22%, #1c4208 60%, #0a2000) padding-box, linear-gradient(135deg, #3a3a3a 20%, #505050 60%, #aaa 90%) border-box;
}

.dome.fail { background: radial-gradient(circle at 27% 27%, #d09090, #8a1c10 22%, #700c08 60%, #380000) padding-box, linear-gradient(135deg, #3a3a3a 20%, #505050 60%, #aaa 90%) border-box; }
.dome svg { width: 34px; height: 58px; }

.times { display: flex; width: 195px; height: 46px; margin: 5px 0 0 3px; border: 1px solid #ddd; color: #fe0; text-align: center; }
.times div { flex: 1; padding-top: 5px; }
.times div + div { flex: 0 0 102px; border-left: 1px solid #ddd; }
.times time { display: block; font: italic 18px/22px "DejaVu Sans", sans-serif; }

.atp-right { width: 295px; }
.run { display: flex; justify-content: space-between; height: 53px; padding: 0 1px 0 45px; margin-top: -2px; }

.scen {
  display: flex;
  justify-content: space-between;
  align-items: center;
  width: 146px;
  height: 38px;
  padding: 0 4px 0 19px;
  border: 1px solid #0890a0;
  background: #12e8ff;
  box-shadow: inset 2px 2px 2px #80f8ff, inset -3px -3px 3px #06a0b8;
  font: 14px/17px "DejaVu Sans", sans-serif;
}

.scen span { text-align: center; }

.glass {
  flex: none;
  width: 31px;
  height: 31px;
  border-radius: 50%;
  border: 2px solid #7a8484;
  background: linear-gradient(#c4cccc, #a6b4b4 50%, #d8f4f4);
  box-shadow: 1px 1px 2px #777;
}

.run-sel { width: 93px; }
.run-sel .btn { width: 93px; height: 24px; margin-top: 2px; color: #777; font-weight: bold; font-size: 12px; border-color: #aaa; background: #b5b5b5; box-shadow: none; display: block; }
.run-sel .row { justify-content: flex-end; gap: 4px; color: #000; font-size: 11px; margin-top: 3px; }
.run-sel .led { border-color: #444 #888 #888 #444; }

.tests { border: 2px solid #000; }

.tests li {
  display: flex;
  align-items: center;
  height: 35px;
  padding-right: 3px;
  border-bottom: 2px solid #000;
  background: #c8c8c8;
  font: 16px/20px "DejaVu Sans", sans-serif;
}

.tests span { width: 30px; margin-right: 5px; text-align: right; }
.tests .glass { margin-left: auto; }

/* results */

.results {
  flex: 1;
  min-width: 0;
  display: flex;
  flex-direction: column;
  background: #555;
  border-top: 3px solid #444;
  border-left: 3px solid #666;
}

.res-top { display: flex; height: 35px; padding: 4px 6px 0 4px; flex: none; }
.bars { width: 147px; }
.bars progress { width: 147px; height: 17px; border: 3px solid; border-color: #2c2c2c #777 #777 #2c2c2c; }
.bars progress::-webkit-progress-bar { background: #173f17; }
.bars progress::-webkit-progress-value { background: #1ecb3c; }
.bars .blocks::-webkit-progress-value { background: repeating-linear-gradient(90deg, #28d840 0 10px, #0a5010 10px 11px); }
.uniq { margin: 0 3px 0 7px; color: #999; font-size: 10px; text-align: center; }
.standby { display: flex; align-items: center; justify-content: space-between; width: 110px; height: 21px; margin-top: 3px; padding: 0 3px; border: 3px solid; border-color: #333 #777 #777 #333; background: #404060; color: #ddd; font-size: 10px; }
.standby b { color: #ff0; }
.standby strong { margin-left: -8px; color: #fff; }
.digits { display: flex; align-items: baseline; justify-content: center; width: 82px; height: 28px; margin-left: 22px; border: 3px solid; border-color: #333 #777 #777 #333; background: #141a14; color: #2df03c; font: bold 20px/22px "DejaVu Sans Mono", monospace; }
.digits small { font-size: 13px; }
.digits.amp { width: 98px; margin-left: 4px; }
.digits .led { align-self: center; width: 18px; height: 18px; }
.help { width: 25px; height: 25px; margin: 1px 10px 0 9px; border-radius: 50%; border: 2px solid #a8d4ff; background: radial-gradient(circle at 40% 30%, #5cb8ff, #0860c8); color: #fff; font: bold 19px/20px "DejaVu Sans", sans-serif; flex: none; }
.exit { width: 48px; height: 24px; margin: 3px 0 0 auto; color: #f00; font-size: 19px; border-color: #999; }
.hint { flex: none; color: #fff; font-size: 10px; font-weight: bold; line-height: 10px; text-align: center; height: 10px; }

.table-box { flex: none; border: 3px solid #333; border-right: 0; border-width: 0 0 1px 6px; }
.grid { width: 100%; table-layout: fixed; border-collapse: collapse; background: #fff; }
.grid .c-id { width: 46px; }
.grid .c-err { width: 56px; }
.grid .c-unit { width: 32px; }
.grid .c-max { width: 58px; }
.grid .c-min { width: 64px; }
.grid .c-eff { width: 31px; }
.grid .c-res { width: 62px; }
.grid .c-pf { width: 55px; }
.grid .c-ma { width: 19px; }
.grid th, .grid td { height: 16px; padding: 0 4px; line-height: 13px; font-size: 10px; border-right: 1px solid #999; border-bottom: 1px solid #888; overflow: hidden; text-align: left; }
.grid th { font-weight: normal; height: 17px; border-bottom: 2px solid #888; }
.grid th:first-child { padding: 0 2px; }
.grid th:nth-child(3), .grid th:nth-child(4), .grid th:nth-child(5), .grid th:nth-child(6) { text-align: center; }
.grid td:nth-child(4), .grid td:nth-child(5), .grid td:nth-child(6), .grid td:nth-child(9) { text-align: center; }
.grid th:nth-child(4) { padding: 0; }

.hbar { display: flex; height: 17px; background: linear-gradient(#777, #b8b8b8 60%, #777); }
.hbar button { width: 17px; background: #aaa; border: 1px solid #777; padding-left: 4px; }
.hbar span { margin-left: auto; width: 23px; background: #b0b0b0; border: 1px solid #777; }

.comm { flex: 1; min-height: 0; display: flex; flex-direction: column; width: 618px; padding: 8px 0 0 7px; }
.comm-head { display: flex; height: 21px; margin: 0 4px 0 7px; padding: 2px 0 0 20px; border-top: 2px solid #8a8a8a; }
.comm-head h2 { font-size: 18px; line-height: 22px; width: 103px; }
.bytes { width: 50px; font-size: 10px; line-height: 16px; }
.comm-head > b { font-size: 10px; line-height: 14px; }
.hex { display: flex; height: 15px; }
.hex i { width: 7px; background: #aaa; color: #555; font-size: 9px; text-align: center; }
.hex output { width: 26px; border: 1px solid #888; background: #cfcf90; color: #777; font-weight: bold; line-height: 13px; }
.sgl { width: 52px; height: 16px; margin: 0 2px 0 9px; border: 1px solid #000; background: #ff5; font-weight: bold; line-height: 14px; }
.ver { margin-left: auto; padding: 5px 4px 0 0; font-size: 10px; }

.comm-body { display: flex; height: 82px; }
.comm-left { width: 232px; }
.comm-left > .row > b { width: 29px; font-size: 10px; }
.trn { margin-top: 4px; align-items: flex-start; }
.trn-box { width: 197px; height: 39px; padding: 2px; border: 1px solid #ccc; }
.dec { height: 17px; }
.dec i { width: 6px; }
.dec input, .dec output { width: 26px; text-align: center; background: #bbb; border: 1px solid #777; color: #777; }
.dec input { background: #fff; color: #000; font-weight: bold; border-color: #000; }
.idx { width: 22px; text-align: center; font-size: 10px; }
.hscroll { display: flex; flex: 1; background: #f3f2ea; height: 16px; }
.hscroll button { width: 14px; height: 14px; }
.hscroll span { flex: 1; }
.hscroll i { width: 13px; margin: 1px; background: #c3d5fd; border: 1px solid #98b0e8; }
.lv { width: 17px; height: 16px; line-height: 16px; background: #00f; color: #fff; text-align: center; }
.rcv { margin-top: 6px; }
.rcv-box { width: 198px; }

.comm-right { flex: 1; min-width: 0; font-weight: bold; font-size: 10px; }
.comm-right label { line-height: 10px; height: 6px; margin-top: -3px; }
.comm-right > textarea { width: 367px; height: 29px; margin-left: 2px; margin-top: 2px; margin-bottom: 3px; padding: 2px 2px; border: 1px solid #000; font-weight: bold; }
.receive { display: flex; width: 374px; height: 40px; padding: 1px; margin-top: 5px; border: 1px solid #000; background: #fff; }
.receive textarea { flex: 1; padding-left: 2px; font-size: 10px; line-height: 13px; font-weight: normal; }
.receive b { width: 27px; height: 14px; background: #4de010; text-align: center; line-height: 14px; }

.line { display: flex; height: 15px; line-height: 15px; font-size: 11px; }
.line b { width: 418px; padding-left: 1px; }
.line span { margin-left: 4px; font-size: 10px; }
.log { flex: 1; min-height: 0; display: flex; margin-left: 6px; background: #b3b3b3; }
.log-text { flex: 1; font-size: 10px; }
.log-text p { display: flex; justify-content: space-between; height: 20px; line-height: 20px; padding: 0 17px 0 4px; }
```
FILE: charts.js
```
let seed = 7
function rnd () {
  seed = (seed * 16807) % 2147483647
  return seed / 2147483647
}

const kilo = ['0', '2.5', '5', '7.5', '10', '12.5', '15', '17.5', '20', '22.5', '25']

// all positions are in pixels of the chart's own svg
const charts = {
  freq: {
    size: [222, 88], plot: [34, 4, 181, 69], grid: ['#003c00', '#007000'], minor: [0, 17], major: [10, 3], small: true,
    y: ['0.15', '0.1', '0.05', '0'], x: kilo,
    legend: ['Ch0', 'Ch1', 'Ch2'], tools: [64, 'cross', 'zoom', 'hand*']
  },
  phase: {
    size: [228, 88], plot: [27, 4, 194, 69], grid: ['#003c00', '#007000'], minor: [0, 16], major: [10, 4], small: true,
    y: ['4', '2', '0', '-2', '-4'], x: kilo,
    legend: ['Ch0', 'Ch1', 'Ch2'], tools: [81, 'cross', 'zoom', 'hand*'], note: ['Deg.', 40, 11, '#ff0', 10]
  },
  faults: {
    size: [205, 88], plot: [15, 1, 182, 74], grid: ['#4a4a00', '#7a7a00'], minor: [30, 12], major: [6, 4], bold: true,
    y: ['40', '30', '20', '10', '0'], x: ['1', '10', '20', '30', '40', '50', '60'],
    legend: ['Plot 0', 'Plot 1'], white: true, draw: bars
  },
  wave: {
    size: [354, 124], plot: [42, 5, 305, 102], grid: ['#003c00', '#007000'], minor: [50, 20], major: [10, 4],
    y: ['2E-6', '1E-6', '0', '-1E-6', '-2E-6'], x: ['0', '10', '20', '30', '40', '50', '60', '70', '80', '90', '100'],
    legend: ['Ch0', 'Ch1', 'Ch2'], tools: [184, 'zoom*', 'hand'], draw: envelope
  },
  noise: {
    size: [226, 66], plot: [42, 3, 175, 50], grid: ['#003c00', '#007000'], minor: [20, 8], major: [5, 2], tag: true,
    y: ['2E+0', '0E+0', '-2E+0'], x: ['0', '2', '4', '6', '8', '10'],
    legend: ['Ch0', 'Ch1', 'Ch2'], tools: [85, 'zoom*', 'hand'], note: ['+/-2V limits', 0, 10, '#f00', 10]
  },
  ad: {
    size: [440, 152], plot: [72, 17, 367, 114], grid: ['#003c00', '#007000'], minor: [46, 18], major: [0, 3], thin: true,
    y: [['0.006208', 0], ['0', .4], ['-0.005', .73], ['-0.009241', 1]],
    x: [['44515', 0], ['46000', .09], ['48000', .215], ['50000', .337], ['52000', .459], ['54000', .58], ['56000', .702], ['58000', .824], ['60824', 1]],
    legend: ['CH0', 'CH1', 'CH2'], legendAt: 18, tools: [297, 'cross', 'zoom*', 'hand'], toolsY: 98, draw: burst
  }
}

function line (d, stroke, width, extra) {
  return `<path d="${d}" fill="none" stroke="${stroke}" stroke-width="${width || 1}" ${extra || ''}/>`
}

function text (s, x, y, anchor, size, fill, bold) {
  return `<text x="${x}" y="${y}" text-anchor="${anchor}" font-size="${size}" fill="${fill || '#000'}" ${bold ? 'font-weight="bold"' : ''}>${s}</text>`
}

function ticks (list) {
  return list.map((t, i) => Array.isArray(t) ? t : [t, i / (list.length - 1)])
}

function gridLines (n, m, [px, py, pw, ph], color) {
  let d = ''
  for (let i = 1; i < n; i++) d += `M${Math.round(px + i * pw / n) + .5} ${py}v${ph}`
  for (let i = 1; i < m; i++) d += `M${px} ${Math.round(py + i * ph / m) + .5}h${pw}`
  return line(d, color)
}

function tool (name, x, y) {
  const on = name.endsWith('*')
  const icons = {
    cross: '<path d="M10.500 3v11M5 8.500h11" stroke="#000"/><rect x="9.500" y="7.500" width="2" height="2" fill="#fff"/>',
    zoom: '<circle cx="12" cy="6" r="4" fill="#cce" stroke="#125"/><path d="M10 6h4M12 4v4" stroke="#006"/><path d="M9 9l-5 5" stroke="#000" stroke-width="2"/><path d="M12 12h5l-2.500 3z"/>',
    hand: '<path d="M7 14L5 9l1-1 2 2V4h1v4V2h2v6-5h2v5-4h1v7l-2 4z" fill="#fff" stroke="#000" stroke-width=".8"/>'
  }
  return `<g transform="translate(${x} ${y})"><rect width="19" height="15" fill="${on ? '#666' : '#b5b5b5'}"/><path d="M0 15V0h19" fill="none" stroke="#ddd"/><rect x="2" y="2" width="3" height="3" fill="${on ? '#4f0' : '#354'}"/>${icons[name.replace('*', '')]}</g>`
}

function legend (c, [px, py, pw]) {
  const w = c.white ? 36 : c.tag ? 22 : 28
  const x = px + pw - w - (c.legendAt || 0)
  const colors = c.white ? ['#f00', '#6f0'] : ['#fff', '#f44', '#0f0']
  return c.legend.map((name, i) => {
    const y = py + 1 + i * 19 - (c.tag ? 3 : 0)
    let s = `<rect x="${x + .5}" y="${y + .5}" width="${w - 1}" height="13" fill="#000" stroke="#ccc"/>`
    if (c.white) s += line(`M${x + 2} ${y + 9}h4v-4h8v4h7v-4h7v4h5`, colors[i], 3)
    else s += line(`M${x + 3} ${y + 9}l8-5 8 5${c.tag ? '' : 'l6-3'}`, colors[i])
    if (i === 2) s += `<path d="M${x + 2} ${y + 8}h3v3h-3zM${x + 10} ${y + 3}h3v3h-3zM${x + 18} ${y + 8}h3v3h-3z" fill="#0f0"/>`
    return s + text(name, x - 3, y + 9, 'end', 11, c.white ? '#fff' : '#ff0', true)
  }).join('')
}

function bars () {
  const b = [[24, 28, 28], [36, 40, 30], [64, 89, 28], [122, 126, 30], [134, 138, 30]]
  return b.map(([a, z, t]) => `<rect x="${a}" y="${t}" width="${z - a}" height="${75 - t}" fill="#6f0"/>`).join('') + line('M15 74.500h143', '#f00', 2)
}

function envelope ([px, py, pw, ph]) {
  const parts = [[0, 12.5, 49], [12.5, 17.5, 2], [17.5, 29.5, 47], [29.5, 41, 17], [41, 46, 2], [46, 58.5, 17], [58.5, 81, 1], [81, 93, 6]]
  const mid = py + ph / 2
  let green = ''
  let red = ''
  let white = ''
  for (const [a, b, amp] of parts) {
    for (let i = Math.round(a * 3.05); i < Math.round(b * 3.05); i++) {
      const x = px + i + .5
      const j = amp > 5 ? rnd() * 3 : 0
      const top = amp > 5 ? rnd() * rnd() * amp * .4 : 0
      const low = amp > 5 ? rnd() * rnd() * amp * .4 : 0
      green += `M${x} ${mid - amp - 2 + j}V${mid + amp + 2 - j}`
      red += `M${x} ${mid - amp + j}V${mid + amp - j}`
      white += `M${x} ${mid - Math.max(amp - 2 - top, 1)}V${mid + Math.max(amp - 2 - low, 1)}`
    }
  }
  return line(green, '#0f0', 3) + line(red, '#f44', 1) + line(white, '#fff', 1)
}

function burst ([px, py, pw, ph]) {
  let green = ''
  let red = ''
  let white = ''
  for (let i = 0; i < pw; i++) {
    const x = px + i + .5
    green += `M${x} ${py + 45 + rnd() * 4}v9`
    red += `M${x} ${py + 53}v${6 + rnd() * 4}`
    white += `M${x} ${py + 49 + rnd() * 4}v${3 + rnd() * 5}`
  }
  // wave packet: white strokes with red and green ones between them
  const hull = ['', '', '']
  for (let i = 60; i < 85; i++) {
    const x = px + i + .5
    const a = Math.pow(Math.cos((i - 72) / 28 * Math.PI), 2) * 50
    const k = [1, 0, 0, 2, 0][i % 5]
    const r = k ? 1 : .85
    hull[k] += `M${x} ${py + 54 - a * r * (.85 + rnd() * .15)}V${py + 54 + a * r * (.85 + rnd() * .15)}`
  }
  return line(green, '#0f0', 1) + line(red, '#f44', 1) + line(white, '#fff') +
    line(hull[2], '#0f0', 3) + line(hull[1], '#f44', 2) + line(hull[0], '#fff', 1) +
    text('CH1-3_AD', 64, 10, 'start', 11, '#000', true) +
    text('+/-8V limits !!!', 53, 28, 'start', 12, '#f00', true) +
    line('M176 18v10M178 23h12', '#aaa', 1, 'stroke-dasharray="1 1"') + line('M183.500 17v12M223.500 17v12M268.500 17v12', '#ccc') +
    text('0', 198, 27, 'start', 9, '#ff0') + text('0.0025634', 225, 27, 'start', 9, '#ff0') +
    '<path d="M328 17l6 6-6 6-6-6zM320 25l6 6-6 6-6-6zM336 25l6 6-6 6-6-6zM328 33l6 6-6 6-6-6z" fill="#b3b3b3"/>'
}

function render (svg, c) {
  const [px, py, pw, ph] = c.plot
  svg.setAttribute('width', c.size[0])
  svg.setAttribute('height', c.size[1])
  let s = `<rect x="${px}" y="${py}" width="${pw}" height="${ph}" fill="#000"/>`
  s += gridLines(c.minor[0], c.minor[1], c.plot, c.grid[0]) + gridLines(c.major[0], c.major[1], c.plot, c.grid[1])
  if (c === charts.ad) {
    for (const [, f] of ticks(c.x)) s += line(`M${Math.round(px + f * pw) + .5} ${py}v${ph}`, c.grid[1])
  }
  s += line(`M${px - 1} ${py + ph}V${py - 1}H${px + pw}`, '#777') + line(`M${px} ${py + ph + .5}h${pw + .5}V${py}`, '#ddd')

  for (const [t, f] of ticks(c.y)) {
    const y = Math.round(py + f * ph)
    if (c.tag) s += `<rect x="${px - 9 - t.length * 6}" y="${y - 5}" width="${t.length * 6}" height="11" fill="#ff6"/>`
    if (!c.bold) s += line(`M${px - 7} ${y + .5}h5`, '#000')
    s += text(t, px - (c.bold ? 3 : 10), y + 4, 'end', c.tag || c.thin ? 10 : 11, '#000', !c.tag && !c.thin)
  }
  for (const [t, f] of ticks(c.x)) {
    const x = Math.round(px + f * pw)
    const y = py + ph + (c.tag ? 13 : c.bold ? 12 : c.small ? 14 : 16)
    if (!c.bold) s += line(`M${x + .5} ${py + ph + 2}v4`, '#000')
    if (c.tag) s += `<rect x="${x - t.length * 3}" y="${y - 9}" width="${t.length * 6}" height="10" fill="#ff6"/>`
    s += text(t, x, y, 'middle', c.bold ? 11 : c.small ? 9 : 10, '#000', c.bold)
  }
  if (c.draw) s += c.draw(c.plot)
  s += legend(c, c.plot)
  if (c.tools) c.tools.slice(1).forEach((t, i) => { s += tool(t, px + c.tools[0] + i * 21, py + (c.toolsY || 2)) })
  if (c.note) s += text(c.note[0], px + c.note[1], py + c.note[2], 'start', c.note[4], c.note[3], c.tag)
  svg.innerHTML = s
}

document.querySelectorAll('svg[data-chart]').forEach((svg) => render(svg, charts[svg.dataset.chart]))
```
